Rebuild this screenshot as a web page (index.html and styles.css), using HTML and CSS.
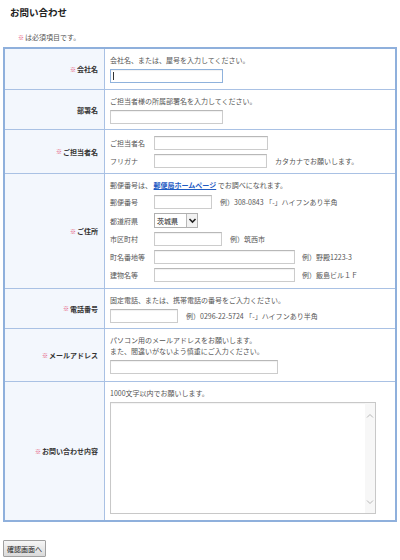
FILE: index.html
```html
<!DOCTYPE html>
<html lang="ja">
<head>
<meta charset="utf-8">
<title>お問い合わせ</title>
<link rel="stylesheet" href="styles.css">
</head>
<body>
<div class="page">
  <h1 class="title">お問い合わせ</h1>
  <p class="note"><span class="req">※</span>は必須項目です。</p>

  <div class="form">
    <div class="row">
      <div class="label"><span class="req">※</span>会社名</div>
      <div class="field">
        <p class="desc">会社名、または、屋号を入力してください。</p>
        <span class="input focus w113"><span class="caret"></span></span>
      </div>
    </div>

    <div class="row">
      <div class="label">部署名</div>
      <div class="field tight">
        <p class="desc">ご担当者様の所属部署名を入力してください。</p>
        <span class="input w113"></span>
      </div>
    </div>

    <div class="row">
      <div class="label"><span class="req">※</span>ご担当者名</div>
      <div class="field stack tight">
        <div class="sub"><span class="sublabel">ご担当者名</span><span class="input w114"></span></div>
        <div class="sub"><span class="sublabel">フリガナ</span><span class="input w113"></span><span class="ex">カタカナでお願いします。</span></div>
      </div>
    </div>

    <div class="row">
      <div class="label"><span class="req">※</span>ご住所</div>
      <div class="field stack">
        <p class="desc">郵便番号は、 <a class="link" href="#">郵便局ホームページ</a> でお調べになれます。</p>
        <div class="sub"><span class="sublabel">郵便番号</span><span class="input w58"></span><span class="ex">例）308-0843 「-」ハイフンあり半角</span></div>
        <div class="sub"><span class="sublabel">都道府県</span><span class="select"><span class="select-text">茨城県</span><span class="select-arrow"><svg width="9" height="7" viewBox="0 0 9 7"><path d="M1.5 2 L4.5 5 L7.5 2" fill="none" stroke="#222" stroke-width="1.6"/></svg></span></span></div>
        <div class="sub"><span class="sublabel">市区町村</span><span class="input w68"></span><span class="ex">例）筑西市</span></div>
        <div class="sub"><span class="sublabel">町名番地等</span><span class="input w141"></span><span class="ex ex7">例）野殿1223-3</span></div>
        <div class="sub"><span class="sublabel">建物名等</span><span class="input w141"></span><span class="ex ex7">例）飯島ビル１Ｆ</span></div>
      </div>
    </div>

    <div class="row">
      <div class="label"><span class="req">※</span>電話番号</div>
      <div class="field tight">
        <p class="desc">固定電話、または、携帯電話の番号をご入力ください。</p>
        <div class="sub"><span class="input w68"></span><span class="ex">例）0296-22-5724 「-」ハイフンあり半角</span></div>
      </div>
    </div>

    <div class="row">
      <div class="label"><span class="req">※</span>メールアドレス</div>
      <div class="field loose">
        <p class="desc">パソコン用のメールアドレスをお願いします。<br>また、間違いがないよう慎重にご入力ください。</p>
        <span class="input w168"></span>
      </div>
    </div>

    <div class="row">
      <div class="label"><span class="req">※</span>お問い合わせ内容</div>
      <div class="field">
        <p class="desc">1000文字以内でお願いします。</p>
        <div class="textarea">
          <div class="scroll">
            <svg width="8" height="6" viewBox="0 0 8 6"><path d="M1 4.5 L4 1.5 L7 4.5" fill="none" stroke="#b8b8b8" stroke-width="1"/></svg>
            <svg width="8" height="6" viewBox="0 0 8 6"><path d="M1 1.5 L4 4.5 L7 1.5" fill="none" stroke="#b8b8b8" stroke-width="1"/></svg>
          </div>
        </div>
      </div>
    </div>
  </div>

  <div class="actions">
    <button class="btn" type="button">確認画面へ</button>
  </div>
</div>
</body>
</html>
```

FILE: styles.css
```css
* { box-sizing: border-box; }

body {
  margin: 0;
  background: #ffffff;
  font-family: "Noto Sans CJK JP", "Noto Sans", sans-serif;
  font-size: 7px;
  color: #555555;
}

.page {
  width: 400px;
}

.title {
  margin: 0;
  padding: 6px 0 0 10px;
  font-size: 9.5px;
  line-height: 12px;
  font-weight: bold;
  color: #222222;
}

.note {
  margin: 0;
  padding: 14px 0 0 18px;
  line-height: 10px;
  color: #555555;
}

.req {
  color: #e4466c;
  font-size: 6px;
  margin-right: 1px;
}

.form {
  margin: 4px 0 0 3px;
  width: 394px;
  border: 2px solid #8fb0dc;
}

.row {
  display: grid;
  grid-template-columns: 100px 1fr;
  border-top: 1px solid #a9c1e4;
}

.row:first-child {
  border-top: none;
}

.label {
  background: #f3f7fd;
  border-right: 1px solid #a9c1e4;
  display: flex;
  align-items: center;
  justify-content: flex-end;
  padding-right: 6px;
  font-weight: bold;
  color: #333333;
}

.field {
  padding: 6px 5px 6px 5px;
  display: flex;
  flex-direction: column;
  align-items: flex-start;
  gap: 3px;
}

.field.tight {
  padding-bottom: 5px;
}

.field.loose {
  padding-bottom: 7px;
}

.field.stack {
  gap: 4px;
}

.desc {
  margin: 0;
  line-height: 11px;
  color: #555555;
}

.link {
  color: #1f5cc4;
  font-weight: bold;
  text-decoration: underline;
}

.sub {
  display: flex;
  align-items: center;
}

.sublabel {
  width: 44px;
  flex: none;
  color: #555555;
}

.input {
  display: block;
  height: 14px;
  flex: none;
  background: #ffffff;
  border: 1px solid #cccccc;
  border-top-color: #b8b8b8;
  box-shadow: inset 0 1px 1px rgba(0, 0, 0, 0.06);
  position: relative;
}

.input.focus {
  border-color: #8fb2dc;
}

.caret {
  position: absolute;
  left: 2px;
  top: 2px;
  width: 1px;
  height: 8px;
  background: #333333;
}

.w58 { width: 58px; }
.w68 { width: 68px; }
.w113 { width: 113px; }
.w114 { width: 114px; }
.w141 { width: 141px; }
.w168 { width: 168px; }

.ex {
  margin-left: 8px;
  color: #555555;
}

.ex.ex7 { margin-left: 7px; }

.select {
  display: flex;
  align-items: center;
  width: 44px;
  height: 15px;
  border: 1px solid #b0b0b0;
  background: #ffffff;
  color: #222222;
}

.select-text {
  flex: 1;
  padding-left: 2px;
}

.select-arrow {
  width: 11px;
  height: 13px;
  border-left: 1px solid #b8b8b8;
  background: #f2f2f2;
  display: flex;
  align-items: center;
  justify-content: center;
}

.textarea {
  width: 266px;
  height: 112px;
  border: 1px solid #c8c8c8;
  background: #ffffff;
  box-shadow: inset 0 1px 1px rgba(0, 0, 0, 0.05);
  display: flex;
  justify-content: flex-end;
}

.scroll {
  width: 10px;
  height: 100%;
  background: #f7f7f7;
  display: flex;
  flex-direction: column;
  justify-content: space-between;
  align-items: center;
  padding: 10px 0 8px;
}

.actions {
  padding: 18px 0 0 3px;
}

.btn {
  margin: 0;
  height: 17px;
  width: 43px;
  padding: 0;
  font-family: "Noto Sans CJK JP", "Noto Sans", sans-serif;
  font-size: 7px;
  color: #222222;
  border: 1px solid #a0a0a0;
  border-radius: 1px;
  background: linear-gradient(#f6f6f6, #dadada);
}
```
